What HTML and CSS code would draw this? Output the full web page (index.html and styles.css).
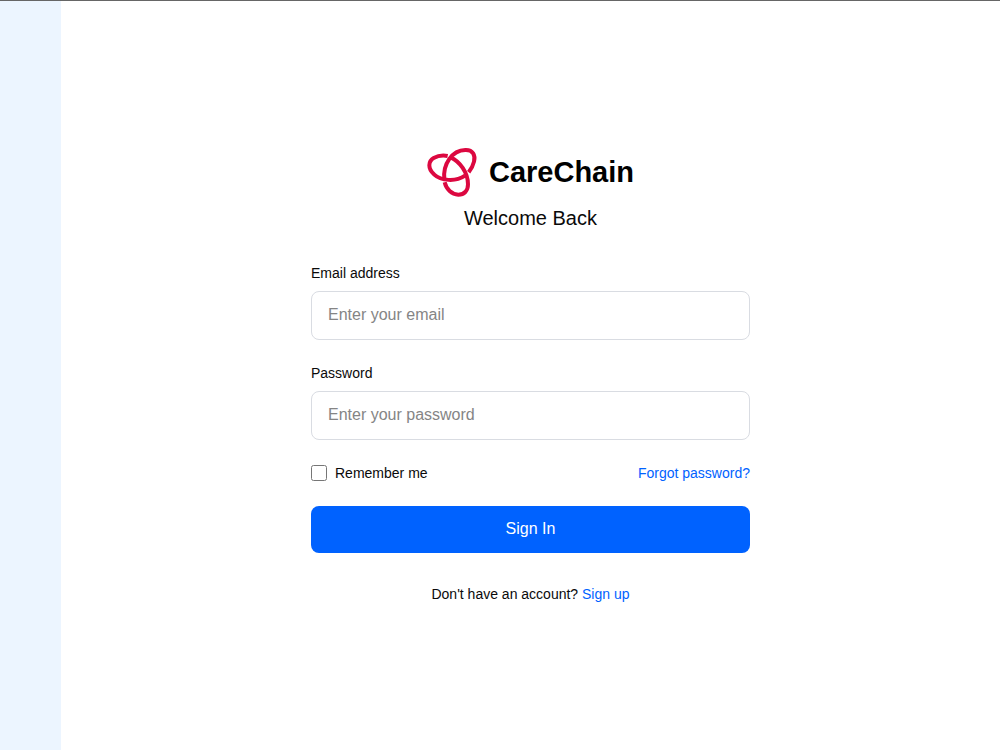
FILE: index.html
```html
<!DOCTYPE html>
<html lang="en">
<head>
<meta charset="utf-8">
<meta name="viewport" content="width=device-width, initial-scale=1">
<title>CareChain – Sign In</title>
<link rel="stylesheet" href="styles.css">
</head>
<body>
<div class="page">
  <aside class="side"></aside>
  <main class="content">
    <div class="panel">
      <header class="header">
        <div class="brand">
          <svg class="logo" viewBox="35 21 150 150" aria-hidden="true">
            <path d="M106 52C133 64 158 98 158 133C158 153 146 164 129 164C109 163 93 148 88 127"/>
            <path d="M87 118C82 72 110 31 150 30C173 29 181 46 176 65C173 78 167 88 160 97"/>
            <path d="M149 107C121 126 77 123 56 103C37 86 38 64 55 54C66 48 81 45 97 48"/>
          </svg>
          <h1 class="name">CareChain</h1>
        </div>
        <p class="welcome">Welcome Back</p>
      </header>
      <form class="form">
        <div class="field">
          <label for="email">Email address</label>
          <input class="input" id="email" type="email" placeholder="Enter your email">
        </div>
        <div class="field">
          <label for="password">Password</label>
          <input class="input" id="password" type="password" placeholder="Enter your password">
        </div>
        <div class="options">
          <label class="remember" for="remember"><input class="check" id="remember" type="checkbox">Remember me</label>
          <a class="link" href="#">Forgot password?</a>
        </div>
        <button class="submit" type="submit">Sign In</button>
      </form>
      <p class="signup">Don't have an account? <a class="link" href="#">Sign up</a></p>
    </div>
  </main>
</div>
</body>
</html>
```
FILE: styles.css
```css
* { box-sizing: border-box; }
body {
  margin: 0;
  font-family: "Liberation Sans", Arial, sans-serif;
  font-size: 14px;
  line-height: 20px;
  color: #0a0a0a;
  background: #fff;
}
.page {
  display: flex;
  min-height: 100vh;
  border-top: 1px solid #666;
}
.side {
  flex: none;
  width: 61px;
  background: #ecf5ff;
}
.content {
  flex: 1;
  display: flex;
  align-items: center;
  justify-content: center;
}
.panel {
  width: 100%;
  max-width: 439px;
  padding-bottom: 1px;
}
.header { text-align: center; margin-bottom: 31px; }
.brand {
  display: flex;
  align-items: center;
  justify-content: center;
  gap: 12px;
}
.logo {
  width: 50px;
  height: 50px;
  overflow: visible;
  fill: none;
  stroke: #dc0840;
  stroke-width: 12;
}
.name {
  margin: 0;
  font-size: 29px;
  line-height: 36px;
  color: #000;
}
.welcome {
  margin: 7px 0 0;
  font-size: 20px;
  line-height: 28px;
}
.form { display: flex; flex-direction: column; gap: 23px; }
.field { display: flex; flex-direction: column; gap: 8px; }
.input {
  width: 100%;
  height: 49px;
  padding: 0 16px;
  border: 1px solid #d9dce2;
  border-radius: 8px;
  font: inherit;
  font-size: 16px;
  background: #fff;
}
.input::placeholder { color: #858585; }
.options {
  display: flex;
  align-items: center;
  justify-content: space-between;
}
.remember { display: flex; align-items: center; gap: 8px; }
.check { width: 16px; height: 16px; margin: 0; }
.link { color: #0062ff; text-decoration: none; }
.submit {
  height: 47px;
  border: 0;
  border-radius: 8px;
  font: inherit;
  font-size: 16px;
  color: #fff;
  background: #0062ff;
}
.signup { margin: 31px 0 0; text-align: center; }
```
